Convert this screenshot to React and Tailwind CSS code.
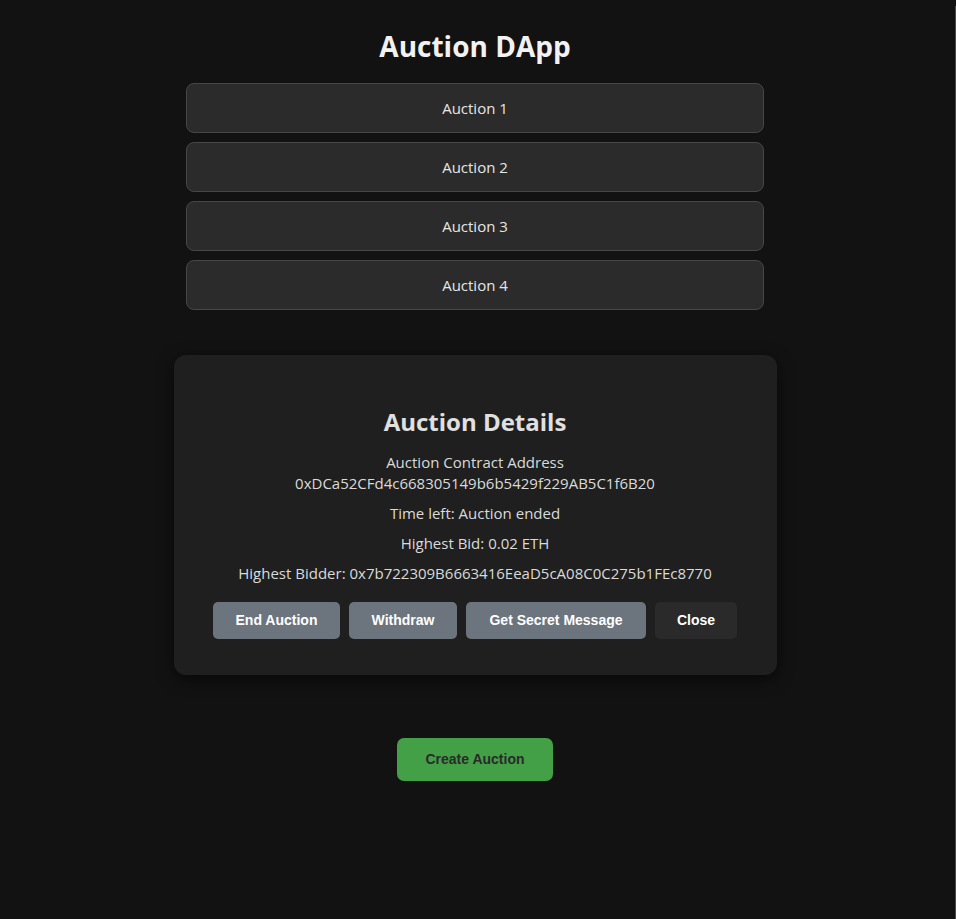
import React from "react";

const font = { fontFamily: '"Open Sans", "Noto Sans", sans-serif' };

export default function App() {
  const auctions = ["Auction 1", "Auction 2", "Auction 3", "Auction 4"];
  return (
    <div className="flex min-h-[919px] w-[956px] bg-[#121212]">
      <main className="flex w-[950px] flex-col items-center pt-[28px]" style={font}>
        <h1 className="text-[28px] font-bold leading-[37px] text-[#f2f2f2]">Auction DApp</h1>
        <div className="mt-[18px] flex w-[578px] flex-col gap-[9px]">
          {auctions.map((a) => (
            <button
              key={a}
              className="h-[50px] w-full rounded-[8px] border border-[#474747] bg-[#2b2b2b] text-[15px] text-[#e6e6e6]"
            >
              {a}
            </button>
          ))}
        </div>

        <section className="mt-[45px] flex h-[320px] w-[603px] flex-col items-center rounded-[12px] bg-[#1f1f1f] shadow-[0_4px_16px_rgba(0,0,0,0.6)]">
          <div className="flex flex-col items-center pt-[51px]">
            <h2 className="text-[24px] font-bold leading-[32px] text-[#e0e0e0]">Auction Details</h2>
            <div className="mt-[14px] flex flex-col items-center text-[15px] leading-[21px] text-[#dadada]">
              <p>Auction Contract Address</p>
              <p>0xDCa52CFd4c668305149b6b5429f229AB5C1f6B20</p>
              <p className="mt-[9px]">Time left: Auction ended</p>
              <p className="mt-[9px]">Highest Bid: 0.02 ETH</p>
              <p className="mt-[9px]">Highest Bidder: 0x7b722309B6663416EeaD5cA08C0C275b1FEc8770</p>
            </div>
            <div
              className="mt-[18px] flex gap-[9px] text-[14px] font-bold text-white"
              style={{ fontFamily: '"Liberation Sans", Arial, sans-serif' }}
            >
              <button className="h-[37px] w-[127px] rounded-[5px] bg-[#6c757d]">End Auction</button>
              <button className="h-[37px] w-[108px] rounded-[5px] bg-[#6c757d]">Withdraw</button>
              <button className="h-[37px] w-[180px] rounded-[5px] bg-[#6c757d]">Get Secret Message</button>
              <button className="h-[37px] w-[82px] rounded-[5px] bg-[#2a2a2a]">Close</button>
            </div>
          </div>
        </section>

        <button
          className="mt-[63px] h-[43px] w-[156px] rounded-[7px] bg-[#43a047] text-[14px] font-bold text-[#2a2a2a]"
          style={{ fontFamily: '"Liberation Sans", Arial, sans-serif' }}
        >
          Create Auction
        </button>
      </main>
      <div className="w-[5px]" />
      <div className="mt-[6px] w-px bg-[#4a4a4a]" />
    </div>
  );
}
